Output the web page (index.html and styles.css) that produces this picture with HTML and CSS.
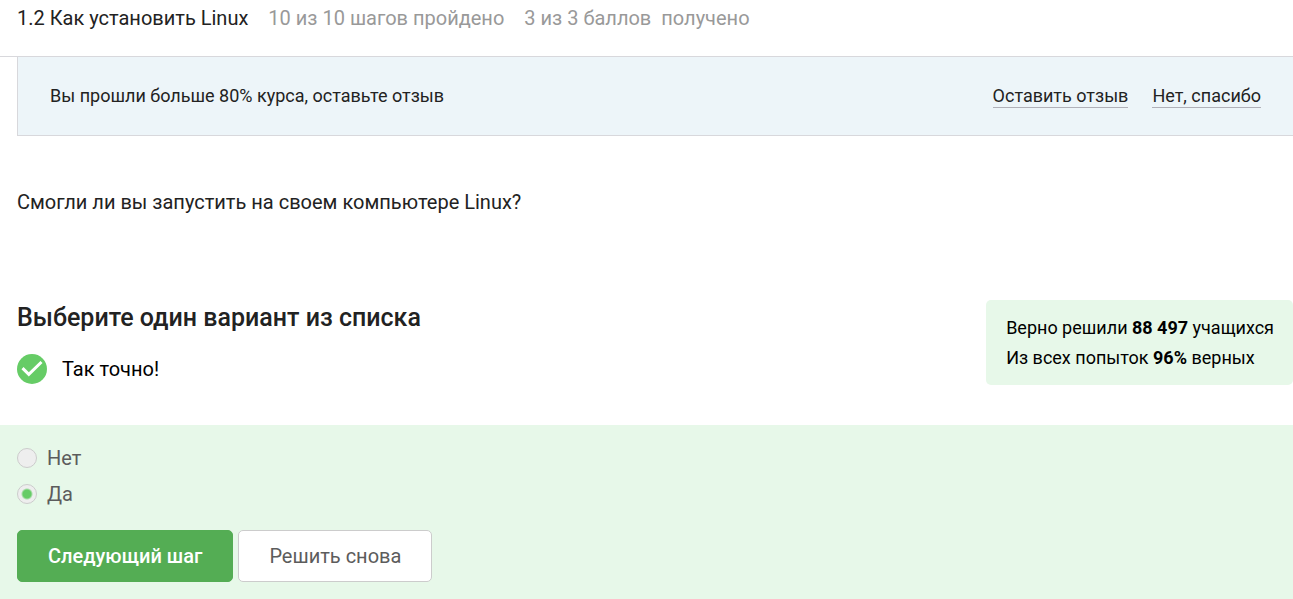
FILE: index.html
```html
<!DOCTYPE html>
<html lang="ru">
<head>
<meta charset="utf-8">
<meta name="viewport" content="width=device-width, initial-scale=1">
<title>1.2 Как установить Linux</title>
<link rel="stylesheet" href="styles.css">
</head>
<body>
<header class="topbar">
  <span class="lesson-title">1.2 Как установить Linux</span>
  <span class="progress">10 из 10 шагов пройдено</span>
  <span class="progress score"><span>3 из 3 баллов</span><span>получено</span></span>
</header>
<main>
  <section class="banner">
    <p class="banner-text">Вы прошли больше 80% курса, оставьте отзыв</p>
    <a class="banner-link" href="#review">Оставить отзыв</a>
    <a class="banner-link" href="#dismiss">Нет, спасибо</a>
  </section>
  <p class="question">Смогли ли вы запустить на своем компьютере Linux?</p>
  <section class="summary">
    <div>
      <h2 class="heading">Выберите один вариант из списка</h2>
      <p class="verdict">
        <svg class="check" viewBox="0 0 30 30" aria-hidden="true">
          <circle cx="15" cy="15" r="15" fill="#66cc66"/>
          <path d="M5.5 14.2 11.8 20.3 24.5 8" fill="none" stroke="#fff" stroke-width="3"/>
        </svg>
        Так точно!
      </p>
    </div>
    <div class="stats">
      <p>Верно решили <b>88 497</b> учащихся</p>
      <p>Из всех попыток <b>96%</b> верных</p>
    </div>
  </section>
  <form class="quiz">
    <label class="option"><input class="radio" type="radio" name="answer" value="no">Нет</label>
    <label class="option"><input class="radio" type="radio" name="answer" value="yes" checked>Да</label>
    <div class="actions">
      <button class="button primary" type="button">Следующий шаг</button>
      <button class="button" type="button">Решить снова</button>
    </div>
  </form>
</main>
</body>
</html>
```
FILE: styles.css
```css
* {
  box-sizing: border-box;
}

body {
  margin: 0;
  min-height: 100vh;
  display: flex;
  flex-direction: column;
  background: #fff;
  color: #222;
  font: 20px/30px Roboto, sans-serif;
}

main {
  flex: 1;
  display: flex;
  flex-direction: column;
}

p,
h2 {
  margin: 0;
}

.topbar {
  display: flex;
  gap: 20px;
  padding: 3px 17px 23px;
  border-bottom: 1px solid #d8d8dc;
}

.progress {
  color: #999;
}

.score {
  display: flex;
  gap: 10px;
}

.banner {
  display: flex;
  align-items: flex-start;
  gap: 24px;
  margin-left: 17px;
  padding: 28px 32px 27px;
  background: #edf5f9;
  border: solid #d8d8dc;
  border-width: 0 0 1px 1px;
  font-size: 18px;
  line-height: 22px;
}

.banner-text {
  flex: 1;
}

.banner-link {
  color: inherit;
  text-decoration: none;
  border-bottom: 1px solid #b0b0b8;
}

.question {
  padding: 51px 17px 83px;
}

.summary {
  display: flex;
  justify-content: space-between;
  align-items: flex-start;
  padding-left: 17px;
  margin-bottom: 40px;
}

.heading {
  font-size: 25px;
  line-height: 36px;
  font-weight: 500;
}

.verdict {
  display: flex;
  align-items: center;
  gap: 15px;
  margin-top: 18px;
  color: #000;
}

.check {
  width: 30px;
  height: 30px;
}

.stats {
  padding: 13px 19px 12px 20px;
  background: #e7f8e9;
  border-radius: 5px;
  color: #000;
  font-size: 18px;
}

.quiz {
  flex: 1;
  padding: 18px 17px 17px;
  background: #e7f8e9;
}

.option {
  display: flex;
  align-items: center;
  gap: 10px;
  margin-bottom: 6px;
  color: #5c5c5c;
}

.radio {
  appearance: none;
  width: 20px;
  height: 20px;
  margin: 0;
  border: 1px solid #ccc;
  border-radius: 50%;
  background: #eee;
}

.radio:checked {
  background: radial-gradient(circle, #66cc66 4px, #eee 6px);
}

.actions {
  display: flex;
  gap: 5px;
  margin-top: 21px;
}

.button {
  height: 52px;
  padding: 0 30px;
  border: 1px solid #ccc;
  border-radius: 5px;
  background: #fff;
  color: #5c5c5c;
  font: inherit;
}

.primary {
  border-color: #54ad54;
  background: #54ad54;
  color: #fff;
  font-weight: 500;
}
```
